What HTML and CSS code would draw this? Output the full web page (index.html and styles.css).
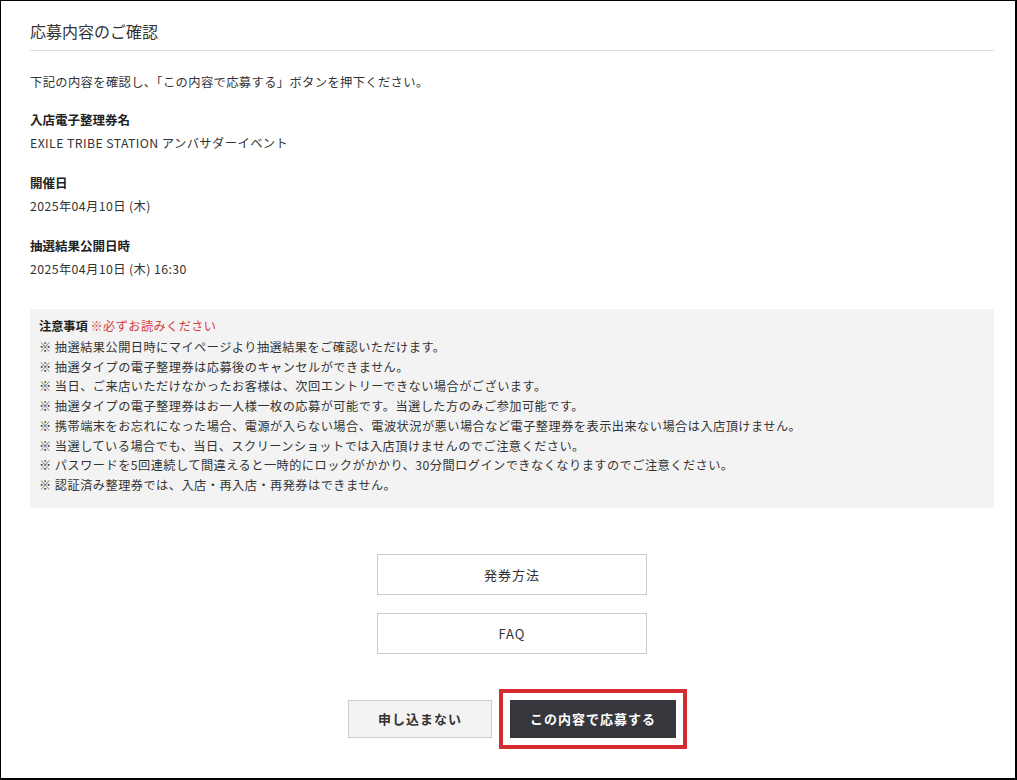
FILE: index.html
```html
<!DOCTYPE html>
<html lang="ja">
<head>
    <meta charset="UTF-8">
    <meta name="viewport" content="width=device-width, initial-scale=1.0">
    <title>応募内容のご確認</title>
    <link rel="stylesheet" href="styles.css">
</head>
<body>
    <div class="frame">
        <div class="page">
            <h2 class="titulo">応募内容のご確認</h2>
            <p class="intro">下記の内容を確認し、「この内容で応募する」ボタンを押下ください。</p>

            <dl class="item">
                <dt>入店電子整理券名</dt>
                <dd>EXILE TRIBE STATION アンバサダーイベント</dd>
            </dl>
            <dl class="item">
                <dt>開催日</dt>
                <dd>2025年04月10日 (木)</dd>
            </dl>
            <dl class="item">
                <dt>抽選結果公開日時</dt>
                <dd>2025年04月10日 (木) 16:30</dd>
            </dl>

            <div class="aviso">
                <p class="aviso-titulo">注意事項 <span class="rojo">※必ずお読みください</span></p>
                <ul>
                    <li>※ 抽選結果公開日時にマイページより抽選結果をご確認いただけます。</li>
                    <li>※ 抽選タイプの電子整理券は応募後のキャンセルができません。</li>
                    <li>※ 当日、ご来店いただけなかったお客様は、次回エントリーできない場合がございます。</li>
                    <li>※ 抽選タイプの電子整理券はお一人様一枚の応募が可能です。当選した方のみご参加可能です。</li>
                    <li>※ 携帯端末をお忘れになった場合、電源が入らない場合、電波状況が悪い場合など電子整理券を表示出来ない場合は入店頂けません。</li>
                    <li>※ 当選している場合でも、当日、スクリーンショットでは入店頂けませんのでご注意ください。</li>
                    <li>※ パスワードを5回連続して間違えると一時的にロックがかかり、30分間ログインできなくなりますのでご注意ください。</li>
                    <li>※ 認証済み整理券では、入店・再入店・再発券はできません。</li>
                </ul>
            </div>

            <div class="enlaces">
                <a class="btn-link" href="#">発券方法</a>
                <a class="btn-link" href="#">FAQ</a>
            </div>

            <div class="acciones">
                <button class="btn btn-cancelar">申し込まない</button>
                <button class="btn btn-enviar">この内容で応募する</button>
            </div>
        </div>
    </div>
</body>
</html>
```

FILE: styles.css
```css
* {
    margin: 0;
    padding: 0;
    box-sizing: border-box;
}

body {
    background-color: #fff;
    font-family: "Noto Sans CJK JP", "Noto Sans", sans-serif;
    color: #333;
}

.frame {
    width: 1017px;
    height: 780px;
    border-top: 1px solid #000;
    border-left: 1px solid #000;
    border-right: 2px solid #000;
    border-bottom: 2px solid #000;
}

.page {
    padding: 0 21px 0 29px;
}

.titulo {
    font-size: 16px;
    font-weight: normal;
    line-height: 20px;
    padding-top: 20px;
    padding-bottom: 9px;
    border-bottom: 1px solid #ddd;
    color: #333;
}

.intro {
    font-size: 12.3px;
    line-height: 20px;
    letter-spacing: 0.35px;
    margin-top: 21px;
}

.item {
    margin-top: 18px;
}

.item + .item {
    margin-top: 20px;
}

.item dt {
    font-size: 12.5px;
    font-weight: bold;
    line-height: 20px;
    color: #222;
}

.item dd {
    font-size: 12.3px;
    line-height: 20px;
    letter-spacing: 0.4px;
    margin-top: 3px;
}

.aviso {
    margin-top: 30px;
    background-color: #f3f3f3;
    padding: 7px 9px 12px;
    font-size: 12.2px;
    line-height: 19.7px;
}

.aviso-titulo {
    font-weight: bold;
    color: #222;
    line-height: 20px;
}

.rojo {
    color: #d23b3b;
    font-weight: normal;
    letter-spacing: 0.4px;
}

.aviso ul {
    list-style: none;
    margin-top: 2px;
    letter-spacing: 0.47px;
}

.enlaces {
    margin-top: 46px;
    display: flex;
    flex-direction: column;
    align-items: center;
    gap: 18px;
}

.btn-link {
    display: flex;
    justify-content: center;
    align-items: center;
    width: 270px;
    height: 41px;
    border: 1px solid #ccc;
    color: #333;
    text-decoration: none;
    font-size: 13px;
    letter-spacing: 1px;
}

.acciones {
    margin-top: 46px;
    display: flex;
    justify-content: center;
    gap: 18px;
}

.btn {
    height: 38px;
    font-family: inherit;
    font-size: 13px;
    font-weight: bold;
    letter-spacing: 1px;
    border: 0;
    cursor: pointer;
}

.btn-cancelar {
    width: 144px;
    background-color: #f3f3f3;
    border: 1px solid #ccc;
    color: #333;
}

.btn-enviar {
    width: 166px;
    background-color: #36373c;
    color: #fff;
    outline: 4px solid #d52b33;
    outline-offset: 7px;
}
```
